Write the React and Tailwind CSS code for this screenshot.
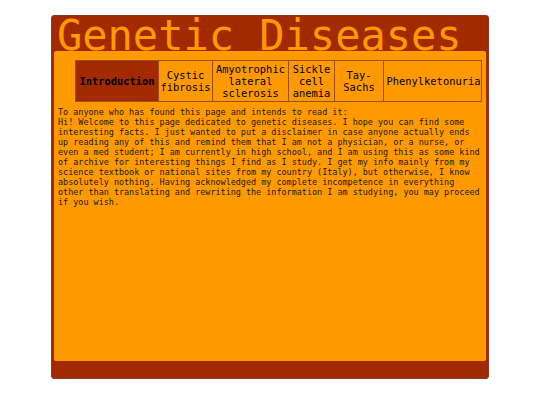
export default function App() {
  const font = { fontFamily: '"DejaVu Sans Mono", monospace' };
  const tabs = [
    { w: "w-[82px]", label: "Introduction", active: true },
    { w: "w-[54px]", label: ["Cystic", "fibrosis"] },
    { w: "w-[76px]", label: ["Amyotrophic", "lateral", "sclerosis"] },
    { w: "w-[46px]", label: ["Sickle", "cell", "anemia"] },
    { w: "w-[49px]", label: ["Tay-", "Sachs"] },
    { w: "w-[100px]", label: "Phenylketonuria" },
  ];
  return (
    <div className="w-[540px] h-[405px] bg-white pt-[15px]" style={font}>
      <div className="mx-auto w-[438px] h-[364px] bg-[#a32a00] rounded-[3px] border border-[#8a3a1e] flex flex-col px-[2px] pb-[17px]">
        <div className="h-[35px] pl-[3px] pt-[5px] shrink-0">
          <h1 className="text-[42px] leading-[30px] text-[#ff9900] whitespace-nowrap">
            Genetic Diseases
          </h1>
        </div>
        <div className="flex-1 bg-[#ff9900] rounded-[2px] pt-[9px] px-[4px]">
          <div className="ml-[17px] flex border border-[#9a4f1a] h-[42px] text-[10.4px] leading-[12px] text-black">
            {tabs.map((t, i) => (
              <div
                key={i}
                className={`${t.w} shrink-0 flex flex-col items-center justify-center text-center ${i > 0 ? "border-l border-[#9a4f1a]" : ""} ${t.active ? "bg-[#a32a00] font-bold" : ""}`}
              >
                {Array.isArray(t.label)
                  ? t.label.map((l, j) => <span key={j}>{l}</span>)
                  : <span>{t.label}</span>}
              </div>
            ))}
          </div>
          <div className="mt-[5px] text-[8.45px] leading-[10px] text-[#1a1a1a] w-[424px]">
            <p>To anyone who has found this page and intends to read it:</p>
            <p>
              Hi! Welcome to this page dedicated to genetic diseases. I hope you can find some interesting facts. I just wanted to put a disclaimer in case anyone actually ends up reading any of this and remind them that I am not a physician, or a nurse, or even a med student; I am currently in high school, and I am using this as some kind of archive for interesting things I find as I study. I get my info mainly from my science textbook or national sites from my country (Italy), but otherwise, I know absolutely nothing. Having acknowledged my complete incompetence in everything other than translating and rewriting the information I am studying, you may proceed if you wish.
            </p>
          </div>
        </div>
      </div>
    </div>
  );
}
